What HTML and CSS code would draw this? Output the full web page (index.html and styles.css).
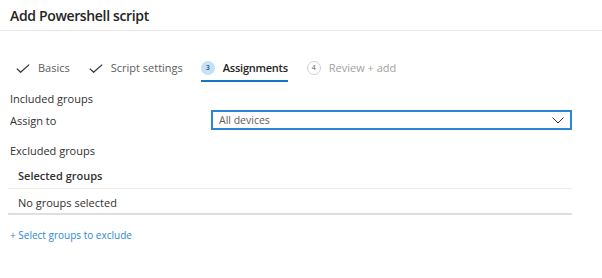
FILE: index.html
```html
<!DOCTYPE html>
<html>
<head>
<meta charset="utf-8">
<link rel="stylesheet" href="styles.css">
</head>
<body>
<div class="page">
  <div class="header"><h1 class="title">Add Powershell script</h1></div>
  <div class="tabs">
    <div class="tab done">
      <svg class="check" width="14" height="9" viewBox="0 0 14 9"><path d="M0.8 4.6 L4.6 8.3 L13.2 0.6" fill="none" stroke="#323130" stroke-width="1.2"/></svg>
      <span>Basics</span>
    </div>
    <div class="tab done">
      <svg class="check" width="14" height="9" viewBox="0 0 14 9"><path d="M0.8 4.6 L4.6 8.3 L13.2 0.6" fill="none" stroke="#323130" stroke-width="1.2"/></svg>
      <span>Script settings</span>
    </div>
    <div class="tab active">
      <span class="num num-active">3</span>
      <span class="tab-text">Assignments</span>
    </div>
    <div class="tab todo">
      <span class="num num-todo">4</span>
      <span>Review + add</span>
    </div>
  </div>
  <div class="content">
    <div class="section-label">Included groups</div>
    <div class="assign-row">
      <div class="assign-label">Assign to</div>
      <div class="dropdown">
        <span>All devices</span>
        <svg class="chev" width="12" height="7" viewBox="0 0 12 7"><path d="M0.5 0.5 L6 6 L11.5 0.5" fill="none" stroke="#323130" stroke-width="1"/></svg>
      </div>
    </div>
    <div class="section-label excluded">Excluded groups</div>
    <div class="grid">
      <div class="grid-head">Selected groups</div>
      <div class="grid-row">No groups selected</div>
    </div>
    <a class="link">+ Select groups to exclude</a>
  </div>
</div>
</body>
</html>
```
FILE: styles.css
```css
html, body { margin: 0; padding: 0; background: #fff; }
body { font-family: "Open Sans", "Noto Sans", sans-serif; color: #323130; font-size: 11px; }
.page { width: 602px; height: 278px; overflow: hidden; }
.header { height: 31px; border-bottom: 1px solid #e6e6e6; padding-left: 10px; box-sizing: border-box; display: flex; align-items: center; }
.title { margin: 0; font-size: 14px; font-weight: 600; color: #252423; letter-spacing: -0.35px; }
.tabs { display: flex; padding: 24px 0 0 16px; }
.tab { display: flex; align-items: center; gap: 8px; height: 27px; box-sizing: border-box; color: #605e5c; padding-bottom: 2px; }
.tab.done { gap: 8px; margin-right: 19px; }
.tab.done + .tab.done { margin-right: 18px; }
.tab.active { color: #252423; font-weight: 600; border-bottom: 2px solid #0f78c8; padding-bottom: 0; margin-right: 19px; }
.tab.active .tab-text { letter-spacing: -0.25px; }
.tab.todo { color: #a19f9d; gap: 8px; }
.check { margin-top: 1px; }
.num { width: 14px; height: 14px; border-radius: 50%; font-size: 7px; display: inline-flex; align-items: center; justify-content: center; font-weight: 600; box-sizing: border-box; letter-spacing: 0; }
.num-active { background: #c7e0f4; color: #0f5c9e; }
.num-todo { border: 1px solid #d2d0ce; color: #605e5c; font-weight: 400; }
.content { padding: 9px 0 0 10px; }
.section-label { height: 15px; line-height: 15px; }
.assign-row { display: flex; align-items: center; margin-top: 4px; }
.assign-label { width: 201px; }
.dropdown { width: 361px; height: 20px; box-sizing: border-box; border: 2px solid #2a86d6; display: flex; align-items: center; justify-content: space-between; padding: 0 6px 0 6px; color: #605e5c; font-size: 10.5px; }
.excluded { margin-top: 13px; }
.grid { margin-left: -2px; width: 564px; margin-top: 7px; }
.grid-head { font-weight: 600; padding-left: 10px; height: 23px; line-height: 21px; border-bottom: 1px solid #edebe9; color: #323130; }
.grid-row { padding: 4px 0 0 10px; height: 20px; line-height: 20px; border-bottom: 2px solid #e1dfdd; }
.link { display: block; color: #2b88d8; margin-top: 13px; font-size: 10px; line-height: 15px; }
```
